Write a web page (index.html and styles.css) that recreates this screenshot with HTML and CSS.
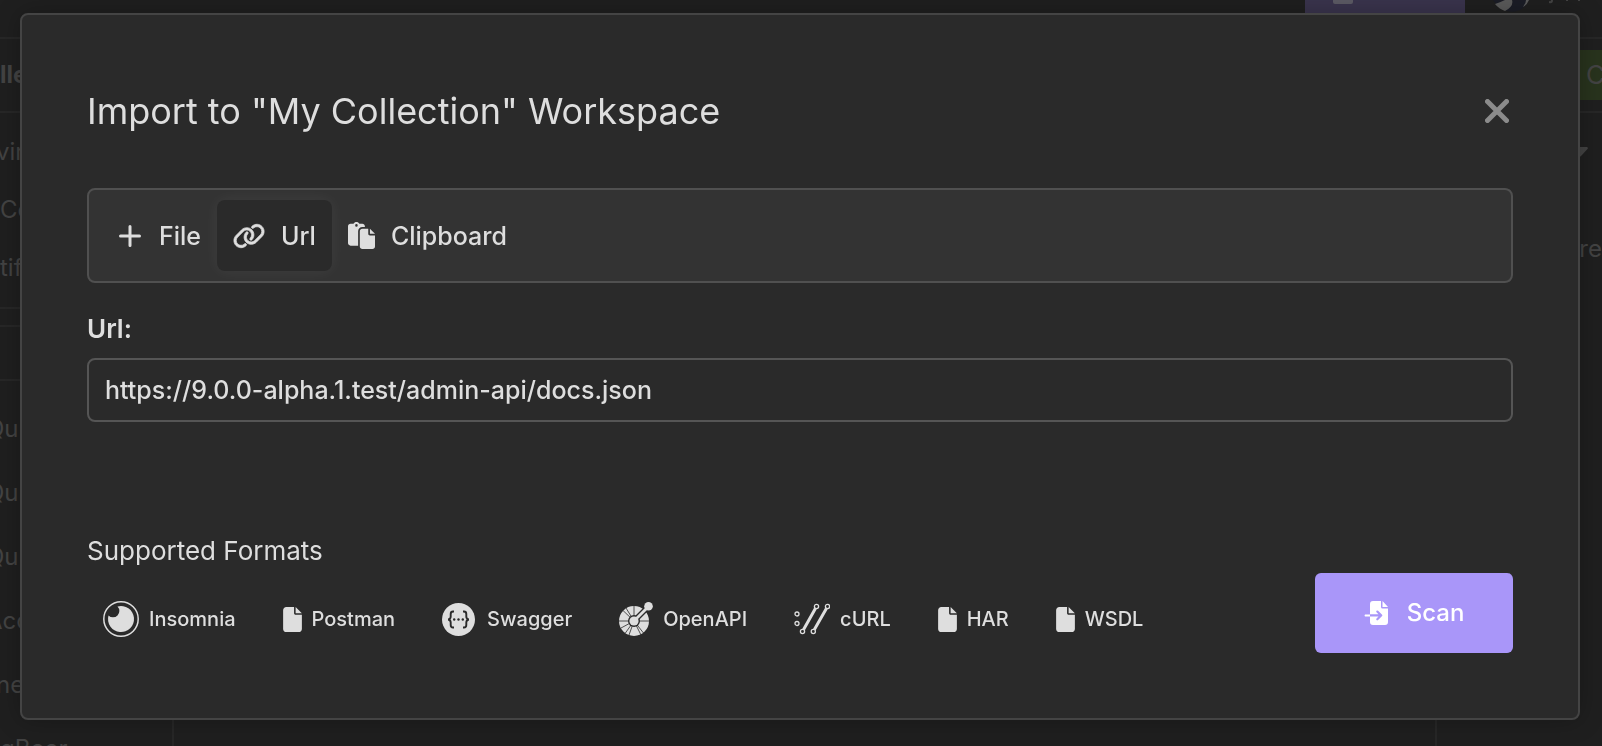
FILE: index.html
```html
<!DOCTYPE html>
<html lang="en">
<head>
<meta charset="utf-8">
<title>Import to "My Collection" Workspace</title>
<link rel="stylesheet" href="styles.css">
</head>
<body>
<svg class="sprite" aria-hidden="true">
  <symbol id="file" viewBox="0 0 384 512"><path d="M0 64C0 28.700 28.700 0 64 0H224V128c0 17.700 14.300 32 32 32H384V448c0 35.300-28.700 64-64 64H64c-35.300 0-64-28.700-64-64V64zm384 64H256V0L384 128z"/></symbol>
</svg>

<div class="app" inert>
  <header class="app-header">
    <span class="invite"><span class="invite-icon"></span></span>
    <svg class="avatar" viewBox="0 0 36 12"><path fill="#1b1d26" d="M0 0h36q-3 7-9 10-6 3-13 1L4 5z"/><path fill="#5a5a5a" d="M2 4Q8 2 12 0h7q2 6-7 11Q6 9 2 4zM33 0h3q-2 5-6 7 3-4 3-7z"/></svg>
    <svg class="user" viewBox="0 0 40 6"><path d="M2 3q4 1 4-3h-2q0 2-2 1zM19 0h2v1h-2zM31 0h2v1h-2z"/></svg>
  </header>
  <div class="app-bar">
    <strong class="crumb">lle</strong>
    <span class="status">C</span>
  </div>
  <div class="app-body">
    <aside class="sidebar">
      <ul class="side-top">
        <li class="cut-small">vir</li>
        <li>Ce</li>
        <li>tif</li>
      </ul>
      <div class="side-gap"></div>
      <div class="side-filter"></div>
      <ul class="side-list">
        <li class="cut">Qu</li>
        <li class="cut">Qu</li>
        <li class="cut">Qu</li>
        <li class="cut">Acc</li>
        <li class="cut-small">ne</li>
        <li>gBeer</li>
      </ul>
    </aside>
    <main class="pane"></main>
    <section class="response"><svg class="caret" viewBox="0 0 16 10"><path d="M1 0h14q1.500.500.500 2L9 9q-1 1-2 0L.500 2Q0 .500 1 0z"/></svg><span class="hint">re</span></section>
  </div>
</div>

<div class="overlay">
  <section class="modal" role="dialog" aria-modal="true" aria-labelledby="title">
    <header class="modal-header">
      <h1 id="title">Import to "My Collection" Workspace</h1>
      <button class="close" type="button" aria-label="Close"><svg viewBox="0 0 24 24"><path d="M2.500 2.500l19 19M21.500 2.500l-19 19"/></svg></button>
    </header>
    <form class="form">
      <div class="tabs" role="tablist">
        <button class="tab" type="button" role="tab"><svg class="i-plus" viewBox="0 0 22 22"><path d="M11 1.500v19M1.500 11h19"/></svg>File</button>
        <button class="tab active" type="button" role="tab" aria-selected="true"><svg class="i-link" viewBox="0 0 640 512"><path d="M580.300 267.200c56.200-56.200 56.200-147.300 0-203.500C526.800 10.200 440.900 7.300 383.900 57.200l-6.100 5.400c-10 8.700-11 23.900-2.300 33.900s23.900 11 33.900 2.300l6.100-5.400c38-33.200 95.200-31.300 130.900 4.400 37.400 37.400 37.400 98.100 0 135.600L433.100 346.600c-37.400 37.400-98.200 37.400-135.600 0-35.700-35.700-37.600-92.900-4.400-130.900l4.700-5.400c8.700-10 7.700-25.100-2.300-33.900s-25.100-7.700-33.900 2.300l-4.700 5.400c-49.800 57-46.900 142.900 6.600 196.400 56.200 56.200 147.300 56.200 203.500 0l113.300-113.300zM59.700 244.800c-56.200 56.200-56.200 147.300 0 203.500 53.600 53.600 139.500 56.400 196.500 6.500l6.100-5.400c10-8.700 11-23.900 2.300-33.900s-23.900-11-33.900-2.300l-6.100 5.400c-38 33.200-95.200 31.300-130.900-4.400-37.500-37.500-37.500-98.300 0-135.700l113.200-113.200c37.400-37.400 98.200-37.400 135.600 0 35.700 35.700 37.600 92.900 4.400 130.900l-5.400 6.100c-8.700 10-7.700 25.100 2.300 33.900s25.100 7.700 33.900-2.300l5.400-6.100c49.900-57 47-142.900-6.500-196.500-56.200-56.200-147.300-56.200-203.500 0z" stroke-width="14" stroke="currentColor"/></svg>Url</button>
        <button class="tab" type="button" role="tab"><svg class="i-paste" viewBox="0 0 512 512"><path fill-rule="evenodd" d="M160 0c-23.700 0-44.400 12.900-55.400 32H48C21.500 32 0 53.500 0 80v320c0 26.500 21.500 48 48 48h144V176c0-44.200 35.800-80 80-80h48V80c0-26.500-21.500-48-48-48h-56.600C204.400 12.900 183.700 0 160 0zm112 128c-26.500 0-48 21.500-48 48v288c0 26.500 21.500 48 48 48h192c26.500 0 48-21.500 48-48V256h-96c-17.700 0-32-14.300-32-32v-96H272zm144 0v96h96l-96-96zM160 40a24 24 0 1 1 0 48 24 24 0 1 1 0-48z"/></svg>Clipboard</button>
      </div>
      <div class="field">
        <label for="url">Url:</label>
        <input id="url" type="text" value="https://9.0.0-alpha.1.test/admin-api/docs.json">
      </div>
    </form>
    <footer class="modal-footer">
      <div class="formats">
        <h2>Supported Formats</h2>
        <ul>
          <li><svg class="i-36" viewBox="0 0 36 36"><circle cx="18" cy="18" r="17.200" fill="none" stroke="currentColor" stroke-width="1.500"/><path d="M14.500 5.500A13 13 0 1 1 5.500 14.500A5 5 0 1 0 14.500 5.500z"/></svg>Insomnia</li>
          <li><svg class="i-file"><use href="#file"/></svg>Postman</li>
          <li class="wide"><svg class="i-33" viewBox="0 0 33 33"><circle cx="16.500" cy="16.500" r="16.500"/><g fill="none" stroke="#2a2a2a" stroke-width="1.900"><path d="M12 8.500h-1q-2.300 0-2.300 2.500v2.500q0 2.500-2.500 3 2.500.500 2.500 3V22q0 2.500 2.300 2.500h1M21 8.500h1q2.300 0 2.300 2.500v2.500q0 2.500 2.500 3-2.500.500-2.500 3V22q0 2.500-2.300 2.500h-1"/></g><g fill="#2a2a2a"><circle cx="12.200" cy="16.500" r="1.200"/><circle cx="16.500" cy="16.500" r="1.200"/><circle cx="20.800" cy="16.500" r="1.200"/></g></svg>Swagger</li>
          <li><svg class="i-34" viewBox="0 0 34 34"><circle cx="15" cy="19" r="15"/><g stroke="#2a2a2a" fill="none"><path stroke-width=".8" d="M15 19V4M15 19H30M15 19H0M15 19L4 8.500M15 19L7 6M15 19L2 26M15 19L6 31.500M15 19L10 33M15 19L24.500 31M15 19L22 33"/><path stroke-width="5.500" d="M15 19L29.500 4.500"/></g><circle cx="15" cy="19" r="6" fill="#2a2a2a"/><path stroke="currentColor" stroke-width="2.800" d="M15 19L29.500 4.500"/><circle cx="15" cy="19" r="4.600"/><circle cx="29.500" cy="4.300" r="4.300"/></svg>OpenAPI</li>
          <li><svg class="i-36" viewBox="0 0 36 36"><g fill="none" stroke="currentColor" stroke-width="1.300"><circle cx="3" cy="13" r="2"/><circle cx="3" cy="22.500" r="2"/><circle cx="22.500" cy="5.500" r="2.100"/><circle cx="33.500" cy="5.500" r="2.100"/><circle cx="8.500" cy="30.500" r="2.100"/><circle cx="19.300" cy="30.500" r="2.100"/><path stroke-width="3" d="M21.400 7.500L9.600 28.500M32.400 7.500L20.400 28.500"/></g></svg>cURL</li>
          <li><svg class="i-file"><use href="#file"/></svg>HAR</li>
          <li><svg class="i-file"><use href="#file"/></svg>WSDL</li>
        </ul>
      </div>
      <button class="scan" type="button"><svg viewBox="0 0 24 24"><path d="M6 3q0-3 3-3H17v6q0 1.500 1.500 1.500H24V21q0 3-3 3H9q-3 0-3-3V15.500h8.500l-2 2q-.600 1 0 1.600t1.600 0l4-4q.600-.700 0-1.400l-4-4q-1-.600-1.600 0t0 1.600l2 2H6z"/><path d="M18.500 0L24 6H18.500zM1 13.500h5v2H1q-1-1 0-2z"/></svg>Scan</button>
    </footer>
  </section>
</div>
</body>
</html>
```
FILE: styles.css
```css
* { box-sizing: border-box; }
body {
  margin: 0;
  height: 100vh;
  overflow: hidden;
  background: #1f1f1f;
  color: #dedede;
  font-family: Inter, "Liberation Sans", sans-serif;
  font-size: 25px;
  font-weight: 500;
  line-height: 32px;
}
h1, h2, ul { margin: 0; padding: 0; font-weight: inherit; font-size: inherit; list-style: none; }
button, input { font: inherit; color: inherit; }
svg { display: block; flex: none; fill: currentColor; }
.sprite { display: none; }

.app { display: flex; flex-direction: column; height: 100%; color: #434343; font-size: 24px; font-weight: 400; }
.app-header { display: flex; height: 39px; border-bottom: 2px solid #272727; justify-content: flex-end; }
.invite { width: 160px; height: 20px; padding-left: 28px; background: #3a344d; }
.invite-icon { display: block; width: 20px; height: 4px; border-radius: 0 0 2px 2px; background: #5c5a64; }
.avatar { width: 36px; height: 12px; margin: 0 18px 0 28px; }
.user { width: 40px; height: 6px; margin-right: 15px; }
.app-bar { display: flex; height: 74px; align-items: center; justify-content: space-between; border-bottom: 2px solid #272727; }
.status { width: 30px; padding-left: 14px; line-height: 50px; background: #28331d; font-size: 26px; overflow: hidden; }
.app-body { display: flex; flex: 1; min-height: 0; }
.sidebar { width: 174px; border-right: 2px solid #272727; overflow: hidden; }
.side-top { padding: 10px 0; border-bottom: 2px solid #272727; }
.side-top li { line-height: 58px; }
.side-gap { height: 18px; border-bottom: 2px solid #272727; }
.side-filter { height: 54px; border-bottom: 2px solid #272727; }
.side-list { padding-top: 16px; }
.side-list li { line-height: 64px; }
.cut { text-indent: -14px; }
.cut-small { text-indent: -4px; }
.pane { flex: 1; border-right: 2px solid #272727; }
.response { display: flex; flex-direction: column; align-items: flex-end; width: 165px; padding-top: 34px; gap: 76px; }
.caret { width: 16px; height: 10px; margin-right: 14px; }

.overlay { position: fixed; inset: 0; padding: 13px 22px 26px 20px; display: flex; }
.modal { flex: 1; display: flex; flex-direction: column; padding: 64px 65px; border: 2px solid #444; border-radius: 8px; background: #2a2a2a; box-shadow: 0 0 24px rgba(0, 0, 0, .25); }
.modal-header { display: flex; align-items: center; justify-content: space-between; height: 64px; }
.modal-header h1 { font-size: 36px; font-weight: 400; line-height: 64px; }
.close { padding: 4px; border: 0; background: none; color: #8b8b8b; }
.close svg { width: 24px; height: 24px; stroke: currentColor; stroke-width: 5; stroke-linecap: round; }
.form { display: flex; flex-direction: column; gap: 28px; margin-top: 45px; }
.tabs { display: flex; padding: 10px 12px; border: 2px solid #505050; border-radius: 8px; background: #333; }
.tab { display: flex; align-items: center; gap: 16px; height: 71px; padding: 0 16px; border: 0; border-radius: 8px; background: none; }
.tab.active { background: #2a2a2a; box-shadow: 0 0 16px rgba(255, 255, 255, .06); }
.i-plus { width: 22px; height: 22px; margin: 0 2px; stroke: currentColor; stroke-width: 3; stroke-linecap: round; }
.i-link { width: 32px; height: 26px; }
.i-paste { width: 27px; height: 27px; }
.field { display: flex; flex-direction: column; gap: 12px; }
.field label { font-size: 26px; font-weight: 600; line-height: 35px; }
.field input { width: 100%; height: 64px; padding: 0 16px; border: 2px solid #555; border-radius: 8px; background: none; outline: 0; }
.modal-footer { display: flex; align-items: flex-end; justify-content: space-between; margin-top: auto; }
.formats h2 { margin-bottom: 17px; font-size: 26px; font-weight: 400; }
.formats ul { display: flex; gap: 47px; padding: 0 16px; font-size: 20px; }
.formats li { display: flex; align-items: center; gap: 10px; height: 70px; }
.formats .wide { gap: 12px; }
.i-36 { width: 36px; height: 36px; }
.i-33 { width: 33px; height: 33px; }
.i-34 { width: 34px; height: 34px; }
.i-file { width: 19px; height: 25px; }
.scan { display: flex; align-items: center; justify-content: center; gap: 19px; width: 198px; height: 80px; margin-bottom: 1px; border: 0; border-radius: 6px; background: #a996f9; color: #fff; font-size: 24px; }
.scan svg { width: 24px; height: 24px; }
```
